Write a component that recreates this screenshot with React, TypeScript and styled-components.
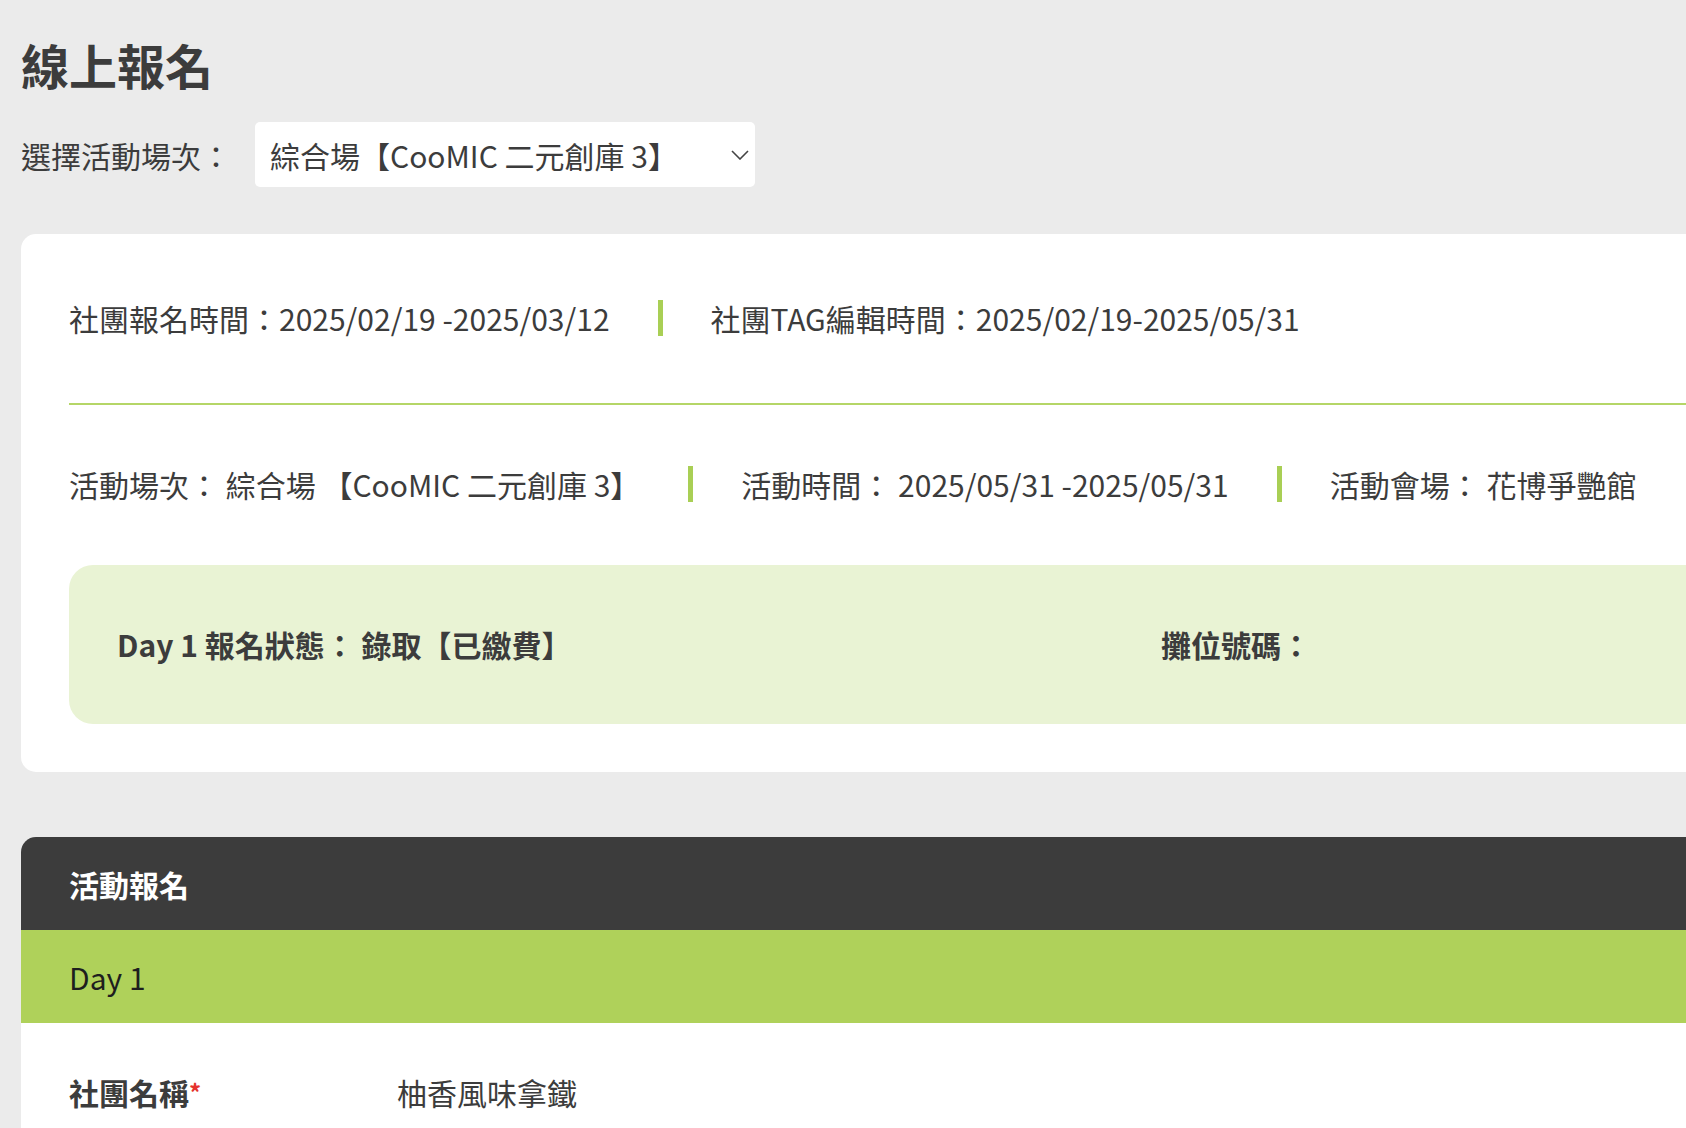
import styled, { createGlobalStyle } from "styled-components";

const GlobalStyle = createGlobalStyle`
  html, body {
    margin: 0;
    padding: 0;
    background: #ebebeb;
    overflow: hidden;
  }
  body {
    font-family: "Noto Sans CJK TC", "Noto Sans", sans-serif;
    color: #3c3c3c;
  }
  * {
    box-sizing: border-box;
  }
`;

const infoRows = [
  [
    { label: "社團報名時間：", value: "2025/02/19 -2025/03/12" },
    { label: "社團TAG編輯時間：", value: "2025/02/19-2025/05/31" },
  ],
  [
    { label: "活動場次： ", value: "綜合場 【CooMIC 二元創庫 3】" },
    { label: "活動時間： ", value: "2025/05/31 -2025/05/31" },
    { label: "活動會場： ", value: "花博爭艷館" },
  ],
];

function Chevron() {
  return (
    <svg width="18" height="10" viewBox="0 0 18 10" fill="none">
      <path d="M1 1l8 8 8-8" stroke="#444" strokeWidth="1.6" />
    </svg>
  );
}

export default function App() {
  return (
    <Page>
      <GlobalStyle />
      <Title>線上報名</Title>

      <SelectRow>
        <SelectLabel>選擇活動場次：</SelectLabel>
        <SelectBox>
          <span>綜合場【CooMIC 二元創庫 3】</span>
          <Chevron />
        </SelectBox>
      </SelectRow>

      <InfoCard>
        {infoRows.map((row, i) => (
          <div key={i}>
            {i > 0 && <Divider />}
            <InfoRow>
              {row.map((item, j) => (
                <InfoItem key={item.label}>
                  {j > 0 && <Sep />}
                  <span>
                    {item.label}
                    {item.value}
                  </span>
                </InfoItem>
              ))}
            </InfoRow>
          </div>
        ))}

        <StatusBox>
          <span>Day 1 報名狀態： 錄取【已繳費】</span>
          <span>攤位號碼：</span>
        </StatusBox>
      </InfoCard>

      <Section>
        <SectionHeader>活動報名</SectionHeader>
        <DayBar>Day 1</DayBar>
        <FormBody>
          <FormRow>
            <FieldLabel>
              社團名稱<Required>*</Required>
            </FieldLabel>
            <FieldValue>柚香風味拿鐵</FieldValue>
          </FormRow>
        </FormBody>
      </Section>
    </Page>
  );
}

const Page = styled.div`
  width: 2200px;
  padding: 35px 0 0 21px;
`;

const Title = styled.h1`
  margin: 0;
  font-size: 48px;
  line-height: 58px;
  font-weight: 700;
  color: #3c3c3c;
`;

const SelectRow = styled.div`
  display: flex;
  align-items: center;
  gap: 24px;
  margin-top: 29px;
`;

const SelectLabel = styled.label`
  font-size: 30px;
  line-height: 40px;
  color: #3c3c3c;
`;

const SelectBox = styled.div`
  width: 500px;
  height: 65px;
  padding: 0 6px 0 15px;
  display: flex;
  align-items: center;
  justify-content: space-between;
  background: #fff;
  border-radius: 5px;
  font-size: 30px;
  color: #3c3c3c;
`;

const InfoCard = styled.section`
  margin-top: 47px;
  background: #fff;
  border-radius: 15px;
  padding: 47px 48px 48px;
`;

const InfoRow = styled.div`
  display: flex;
  align-items: center;
  padding: 19px 0;
  font-size: 30px;
  line-height: 34px;
  color: #3c3c3c;
  white-space: pre;
`;

const InfoItem = styled.div`
  display: flex;
  align-items: center;
`;

const Sep = styled.i`
  display: block;
  width: 5px;
  height: 36px;
  margin: 0 48px;
  background: #a9cf55;
`;

const Divider = styled.hr`
  margin: 48px 0 42px;
  border: 0;
  height: 2px;
  background: #b5d667;
`;

const StatusBox = styled.div`
  margin-top: 44px;
  display: grid;
  grid-template-columns: 1044px 1fr;
  padding: 62px 48px;
  background: #e9f3d4;
  border-radius: 24px;
  font-size: 30px;
  line-height: 35px;
  font-weight: 700;
  color: #3c3c3c;
`;

const Section = styled.section`
  margin-top: 65px;
  border-radius: 15px 15px 0 0;
  overflow: hidden;
`;

const SectionHeader = styled.h2`
  margin: 0;
  height: 93px;
  padding: 0 48px;
  display: flex;
  align-items: center;
  background: #3c3c3c;
  color: #fff;
  font-size: 30px;
  font-weight: 700;
`;

const DayBar = styled.div`
  height: 93px;
  padding: 0 48px;
  display: flex;
  align-items: center;
  background: #afd15a;
  color: #1e1e1e;
  font-size: 30px;
`;

const FormBody = styled.div`
  background: #fff;
  padding: 49px 48px 60px;
`;

const FormRow = styled.div`
  display: grid;
  grid-template-columns: 328px 1fr;
  font-size: 30px;
  line-height: 40px;
`;

const FieldLabel = styled.div`
  font-weight: 700;
  color: #3c3c3c;
`;

const Required = styled.span`
  color: #e5322d;
  font-size: 24px;
  vertical-align: top;
`;

const FieldValue = styled.div`
  color: #3c3c3c;
`;
